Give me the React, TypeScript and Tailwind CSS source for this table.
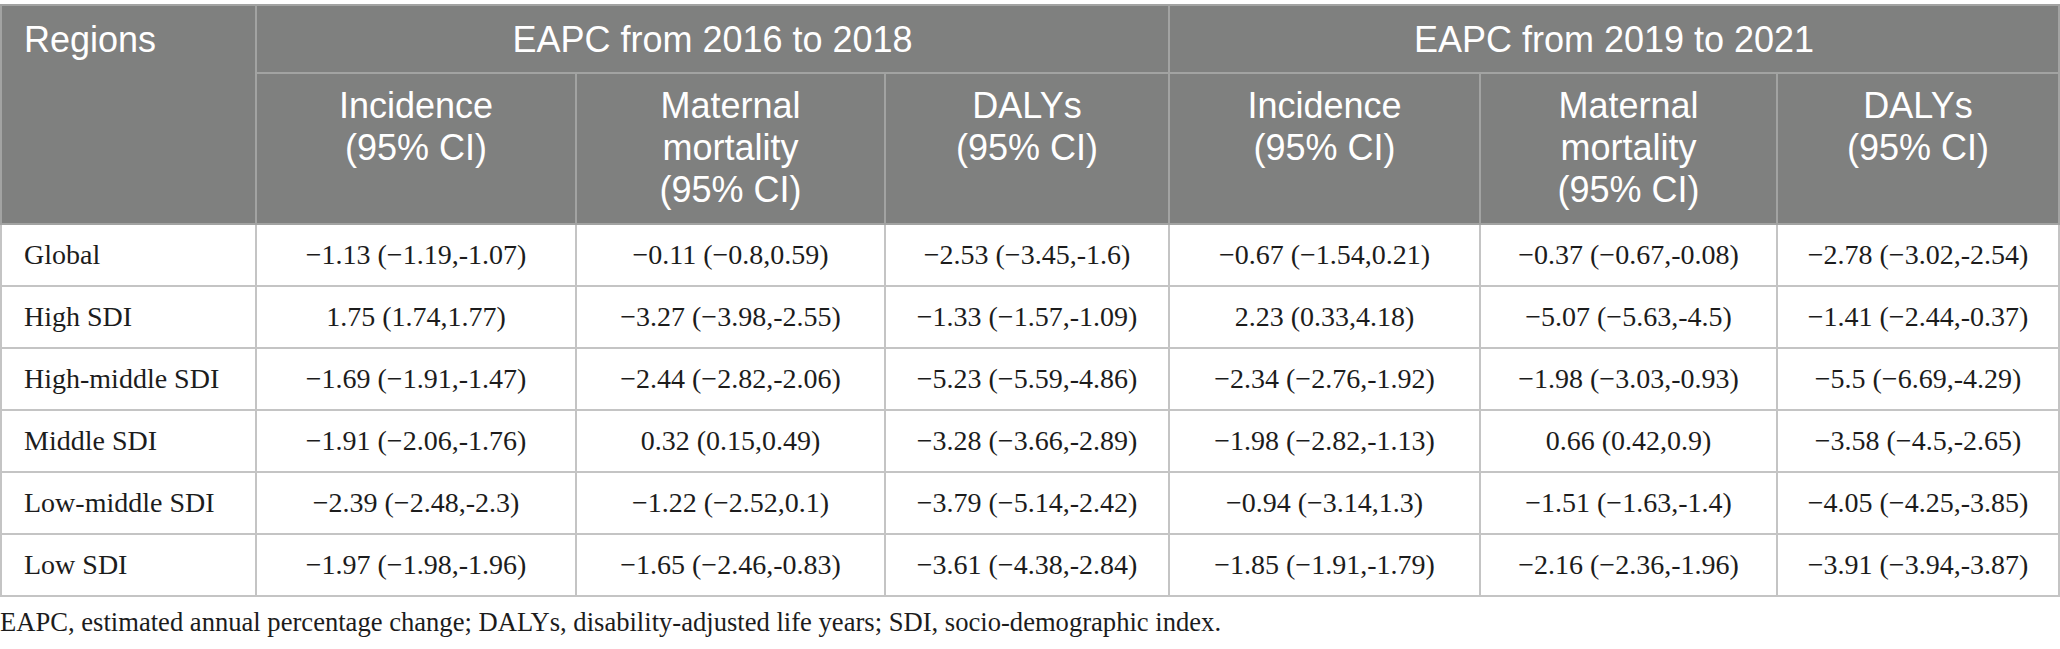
const rows: string[][] = [
  ["Global", "−1.13 (−1.19,-1.07)", "−0.11 (−0.8,0.59)", "−2.53 (−3.45,-1.6)", "−0.67 (−1.54,0.21)", "−0.37 (−0.67,-0.08)", "−2.78 (−3.02,-2.54)"],
  ["High SDI", "1.75 (1.74,1.77)", "−3.27 (−3.98,-2.55)", "−1.33 (−1.57,-1.09)", "2.23 (0.33,4.18)", "−5.07 (−5.63,-4.5)", "−1.41 (−2.44,-0.37)"],
  ["High-middle SDI", "−1.69 (−1.91,-1.47)", "−2.44 (−2.82,-2.06)", "−5.23 (−5.59,-4.86)", "−2.34 (−2.76,-1.92)", "−1.98 (−3.03,-0.93)", "−5.5 (−6.69,-4.29)"],
  ["Middle SDI", "−1.91 (−2.06,-1.76)", "0.32 (0.15,0.49)", "−3.28 (−3.66,-2.89)", "−1.98 (−2.82,-1.13)", "0.66 (0.42,0.9)", "−3.58 (−4.5,-2.65)"],
  ["Low-middle SDI", "−2.39 (−2.48,-2.3)", "−1.22 (−2.52,0.1)", "−3.79 (−5.14,-2.42)", "−0.94 (−3.14,1.3)", "−1.51 (−1.63,-1.4)", "−4.05 (−4.25,-3.85)"],
  ["Low SDI", "−1.97 (−1.98,-1.96)", "−1.65 (−2.46,-0.83)", "−3.61 (−4.38,-2.84)", "−1.85 (−1.91,-1.79)", "−2.16 (−2.36,-1.96)", "−3.91 (−3.94,-3.87)"],
];

const subHeads = [
  ["Incidence", "(95% CI)"],
  ["Maternal", "mortality", "(95% CI)"],
  ["DALYs", "(95% CI)"],
  ["Incidence", "(95% CI)"],
  ["Maternal", "mortality", "(95% CI)"],
  ["DALYs", "(95% CI)"],
];

const head = "bg-[#7f807f] text-white font-normal border-2 border-[#a2a3a2] align-top";

export default function App() {
  return (
    <div className="w-[2060px] h-[649px] bg-white pt-[4px]">
      <table className="w-full table-fixed border-collapse border border-[#c4c4c4]">
        <colgroup>
          <col className="w-[255px]" />
          <col className="w-[320px]" />
          <col className="w-[309px]" />
          <col className="w-[284px]" />
          <col className="w-[311px]" />
          <col className="w-[297px]" />
          <col />
        </colgroup>
        <thead className="font-['Liberation_Sans',sans-serif] text-[36px] leading-[42px]">
          <tr className="h-[68px]">
            <th rowSpan={2} className={`${head} text-left pl-[22px] pt-[13px]`}>
              Regions
            </th>
            <th colSpan={3} className={`${head} text-center pt-[13px]`}>
              EAPC from 2016 to 2018
            </th>
            <th colSpan={3} className={`${head} text-center pt-[13px]`}>
              EAPC from 2019 to 2021
            </th>
          </tr>
          <tr className="h-[151px]">
            {subHeads.map((lines, i) => (
              <th key={i} className={`${head} text-center pt-[11px]`}>
                {lines.map((l) => (
                  <div key={l}>{l}</div>
                ))}
              </th>
            ))}
          </tr>
        </thead>
        <tbody className="font-['Liberation_Serif',serif] text-[28px] text-[#1c1c1c]">
          {rows.map((r) => (
            <tr key={r[0]} className="h-[62px]">
              {r.map((c, i) => (
                <td
                  key={i}
                  className={`border-2 border-[#c4c4c4] align-middle ${i === 0 ? "text-left pl-[22px]" : "text-center"}`}
                >
                  {c}
                </td>
              ))}
            </tr>
          ))}
        </tbody>
      </table>
      <p className="mt-[6px] font-['Liberation_Serif',serif] text-[26.6px] text-[#1c1c1c]">
        EAPC, estimated annual percentage change; DALYs, disability-adjusted life years; SDI, socio-demographic index.
      </p>
    </div>
  );
}
